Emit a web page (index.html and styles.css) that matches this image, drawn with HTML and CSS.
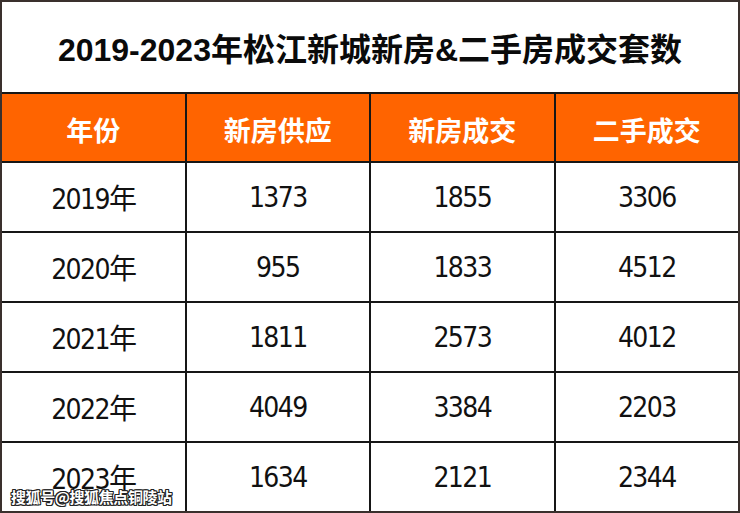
FILE: index.html
```html
<!DOCTYPE html>
<html lang="zh-CN">
<head>
<meta charset="utf-8">
<title>2019-2023年松江新城新房&amp;二手房成交套数</title>
<link rel="stylesheet" href="styles.css">
</head>
<body>
<div class="sheet">
  <div class="grid">
    <div class="title">2019-2023年松江新城新房&amp;二手房成交套数</div>
    <div class="head">年份</div>
    <div class="head">新房供应</div>
    <div class="head">新房成交</div>
    <div class="head">二手成交</div>

    <div class="cell">2019年</div>
    <div class="cell">1373</div>
    <div class="cell">1855</div>
    <div class="cell">3306</div>

    <div class="cell">2020年</div>
    <div class="cell">955</div>
    <div class="cell">1833</div>
    <div class="cell">4512</div>

    <div class="cell">2021年</div>
    <div class="cell">1811</div>
    <div class="cell">2573</div>
    <div class="cell">4012</div>

    <div class="cell">2022年</div>
    <div class="cell">4049</div>
    <div class="cell">3384</div>
    <div class="cell">2203</div>

    <div class="cell">2023年</div>
    <div class="cell">1634</div>
    <div class="cell">2121</div>
    <div class="cell">2344</div>
  </div>
  <div class="watermark">搜狐号@搜狐焦点铜陵站</div>
</div>
</body>
</html>
```

FILE: styles.css
```css
html, body {
  margin: 0;
  padding: 0;
  background: #ffffff;
}

.sheet {
  position: relative;
  width: 740px;
  height: 513px;
  box-sizing: border-box;
  border: 2px solid #3a302d;
  background: #161616;
}

.grid {
  display: grid;
  grid-template-columns: 1fr 1fr 1fr 1fr;
  grid-template-rows: 90px 67px 68px 68px 68px 68px 68px;
  gap: 2px;
  height: 100%;
}

.title {
  grid-column: 1 / 5;
  background: #ffffff;
  display: flex;
  align-items: center;
  justify-content: center;
  font-family: "Liberation Sans", "Noto Sans CJK SC", sans-serif;
  font-weight: 700;
  font-size: 32px;
  color: #0a0a0a;
}

.head {
  background: #ff6400;
  color: #ffffff;
  display: flex;
  align-items: center;
  justify-content: center;
  padding-top: 4px;
  font-family: "Noto Sans CJK SC", sans-serif;
  font-weight: 700;
  font-size: 27px;
}

.cell {
  background: #ffffff;
  color: #111111;
  display: flex;
  align-items: center;
  justify-content: center;
  font-family: "DejaVu Sans Condensed", "Noto Sans CJK SC", sans-serif;
  font-size: 28px;
  letter-spacing: -1.6px;
}

.watermark {
  position: absolute;
  left: 9px;
  top: 484px;
  font-family: "Noto Sans CJK SC", sans-serif;
  font-weight: 700;
  font-size: 15px;
  color: #ffffff;
  letter-spacing: -0.4px;
  text-shadow:
    1px 0 0 #222, -1px 0 0 #222, 0 1px 0 #222, 0 -1px 0 #222,
    1px 1px 0 #222, -1px -1px 0 #222, 1px -1px 0 #222, -1px 1px 0 #222;
}
```
